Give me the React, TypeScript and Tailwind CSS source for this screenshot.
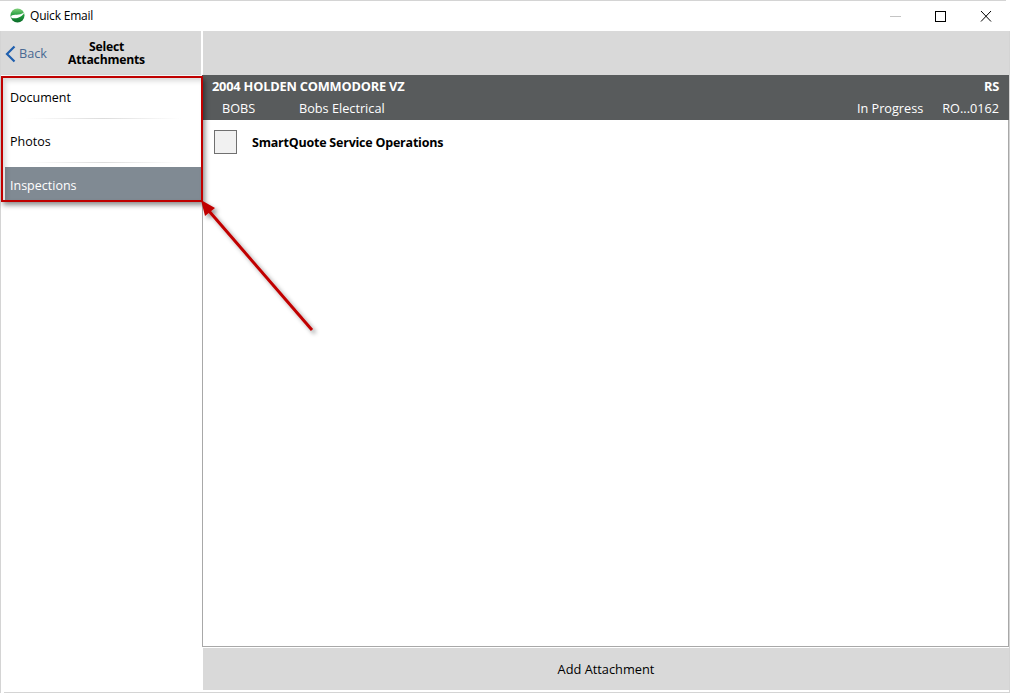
import React from "react";

function Logo() {
  return (
    <svg width="15" height="15" viewBox="0 0 15 15" className="shrink-0">
      <defs>
        <linearGradient id="g" x1="0" y1="0" x2="0" y2="1">
          <stop offset="0" stopColor="#7fd07a" />
          <stop offset="0.5" stopColor="#1f9a3c" />
          <stop offset="1" stopColor="#0b6b2a" />
        </linearGradient>
      </defs>
      <circle cx="7.5" cy="7.5" r="7" fill="url(#g)" />
      <path d="M1 8C4 5.5 9 8.5 14.2 4.3C13.8 7.5 8 11.5 1.5 10Z" fill="#ffffff" />
    </svg>
  );
}

function Divider() {
  return <div className="h-px mx-[20px] bg-gradient-to-r from-transparent via-[#dcdcdc] to-transparent" />;
}

export default function App() {
  return (
    <div className="relative w-[1010px] h-[693px] bg-white overflow-hidden text-[13px] text-black font-['Open_Sans','Noto_Sans',sans-serif] flex flex-col">
      <div className="h-px bg-[#d4d4d4] mr-[4px]" />
      <div className="h-[30px] flex items-center shrink-0">
        <div className="flex items-center pl-[10px] gap-[5px] -mt-px">
          <Logo />
          <span className="text-[12px] leading-none tracking-[-0.2px]">Quick Email</span>
        </div>
        <div className="ml-auto flex items-center -mt-px">
          <svg width="46" height="30" viewBox="0 0 46 30" className="mr-0">
            <path d="M18 15.5h11" stroke="#c4c4c4" strokeWidth="1" />
          </svg>
          <svg width="46" height="30" viewBox="0 0 46 30">
            <rect x="17.5" y="10.5" width="10" height="10" fill="none" stroke="#000" strokeWidth="1" />
          </svg>
          <svg width="46" height="30" viewBox="0 0 46 30">
            <path d="M17 10l10 10.5M27 10L17 20.5" fill="none" stroke="#000" strokeWidth="1" />
          </svg>
        </div>
      </div>
      <div className="flex-1 flex min-h-0 border-l border-[#d4d4d4]">
        <div className="w-[200px] shrink-0 flex flex-col">
          <div className="h-[44px] bg-[#d9d9d9] flex items-center shrink-0 relative">
            <svg width="14" height="18" viewBox="0 0 14 18" className="ml-[3px] shrink-0 mt-[1px]">
              <path d="M10.5 1.5L3 9l7.5 7.5" fill="none" stroke="#1f5fae" strokeWidth="2.2" />
            </svg>
            <span className="text-[12.7px] text-[#4a6a93] ml-[1px] mt-[2px]">Back</span>
            <div className="ml-[21px] w-[77px] text-center font-bold text-[12.2px] leading-[13px] tracking-[-0.2px]">
              <div>Select</div>
              <div>Attachments</div>
            </div>
          </div>
          <div className="flex flex-col pl-[4px]">
            <div className="h-[43px] flex items-center pl-[5px] pt-[3px] text-[12.5px]">Document</div>
            <Divider />
            <div className="h-[43px] flex items-center pl-[5px] pt-[3px] text-[12.5px]">Photos</div>
            <Divider />
            <div className="h-[4px]" />
            <div className="h-[34px] flex items-center pl-[5px] pt-[4px] bg-[#808a93] text-white text-[12.5px]">Inspections</div>
          </div>
        </div>
        <div className="flex-1 min-w-0 flex flex-col">
          <div className="h-[44px] bg-[#d9d9d9] shrink-0 ml-[2px] mr-px" />
          <div className="h-[45px] ml-px bg-[#585b5c] text-white shrink-0 pl-[10px] pr-[10px] mr-px flex flex-col">
            <div className="h-[23px] flex items-center justify-between font-bold text-[12.8px] pt-px tracking-[-0.2px]">
              <span>2004 HOLDEN COMMODORE VZ</span>
              <span>RS</span>
            </div>
            <div className="h-[22px] flex items-center text-[12.7px]">
              <span className="ml-[10px] w-[77px]">BOBS</span>
              <span>Bobs Electrical</span>
              <span className="ml-auto">In Progress</span>
              <span className="ml-[19px]">RO...0162</span>
            </div>
          </div>
          <div className="flex-1 min-h-0 border-l border-r border-b border-[#a8a8a8] ml-px mr-px">
            <div className="flex items-center pl-[11px] pt-[10px]">
              <div className="w-[23px] h-[24px] bg-[#f1f1f1] border border-[#707070]" />
              <span className="ml-[15px] font-bold text-[12.5px] tracking-[-0.22px] mt-[2px]">SmartQuote Service Operations</span>
            </div>
          </div>
          <div className="h-[42px] mt-[1px] mb-[3px] ml-[2px] mr-[1px] bg-[#d9d9d9] flex items-center justify-center text-[12.8px] pt-[2px] shrink-0">
            Add Attachment
          </div>
        </div>
      </div>
      <div className="h-px bg-[#d4d4d4] ml-[4px] absolute bottom-[0px] left-0 right-0" />
      <div className="absolute right-[0px] top-[31px] bottom-[1px] w-px bg-[#d4d4d4]" />

      <div className="absolute left-[1px] top-[76px] w-[202px] h-[126px] border-[2px] border-[#c00000] shadow-[2px_3px_5px_rgba(0,0,0,0.45),inset_3px_3px_5px_rgba(0,0,0,0.15)]" />
      <svg className="absolute left-[195px] top-[195px]" width="130" height="145" viewBox="0 0 130 145">
        <defs>
          <filter id="s" x="-20%" y="-20%" width="140%" height="140%">
            <feDropShadow dx="3" dy="3" stdDeviation="2" floodColor="#000" floodOpacity="0.4" />
          </filter>
        </defs>
        <g filter="url(#s)">
          <path d="M117 135L14 16" stroke="#c00000" strokeWidth="3" fill="none" />
          <path d="M6 5L20 13L10 21Z" fill="#c00000" />
        </g>
      </svg>
    </div>
  );
}
